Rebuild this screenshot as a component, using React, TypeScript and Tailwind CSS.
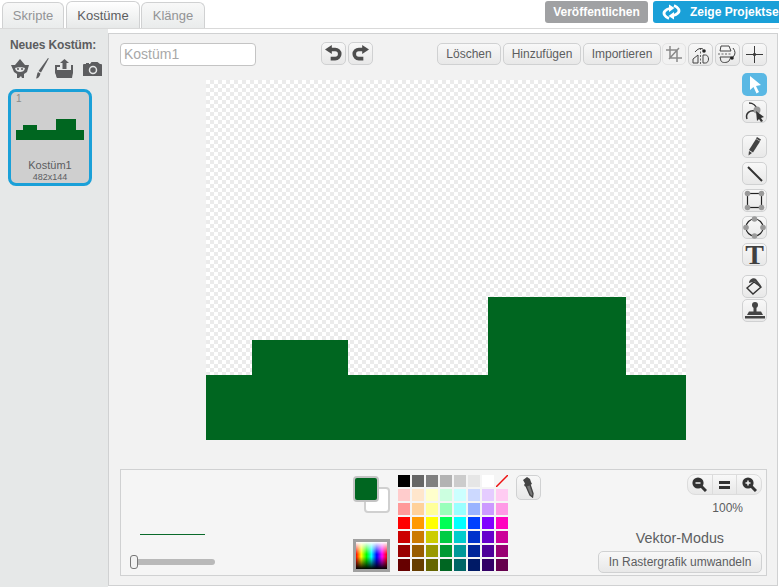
import type { ReactNode } from "react";

const palette = [
  "bg-[#000000]", "bg-[#666666]", "bg-[#808080]", "bg-[#b3b3b3]", "bg-[#cccccc]", "bg-[#e6e6e6]", "bg-[#ffffff]", "none",
  "bg-[#ffcccc]", "bg-[#ffe6cc]", "bg-[#ffffcc]", "bg-[#ccffe0]", "bg-[#ccffff]", "bg-[#ccd9ff]", "bg-[#e5ccff]", "bg-[#ffccf2]",
  "bg-[#ff9999]", "bg-[#ffd199]", "bg-[#ffff99]", "bg-[#99ffbb]", "bg-[#99ffff]", "bg-[#99b3ff]", "bg-[#cc99ff]", "bg-[#ff99e6]",
  "bg-[#ff0000]", "bg-[#ff9900]", "bg-[#ffff00]", "bg-[#00ff55]", "bg-[#00ffff]", "bg-[#0040ff]", "bg-[#8000ff]", "bg-[#ff00bf]",
  "bg-[#cc0000]", "bg-[#cc7a00]", "bg-[#cccc00]", "bg-[#00cc44]", "bg-[#00cccc]", "bg-[#0033cc]", "bg-[#6600cc]", "bg-[#cc0099]",
  "bg-[#990000]", "bg-[#995c00]", "bg-[#999900]", "bg-[#009933]", "bg-[#009999]", "bg-[#002699]", "bg-[#4d0099]", "bg-[#990073]",
  "bg-[#660000]", "bg-[#663d00]", "bg-[#666600]", "bg-[#006622]", "bg-[#006666]", "bg-[#001a66]", "bg-[#330066]", "bg-[#66004d]",
];

function IconButton({ children, className = "" }: { children: ReactNode; className?: string }) {
  return (
    <div className={`flex h-[23px] w-[25px] items-center justify-center rounded-[5px] border border-[#d0d1d2] bg-linear-to-b from-[#f8f8f8] to-[#e8e8e8] ${className}`}>
      {children}
    </div>
  );
}

function TextButton({ label, className = "" }: { label: string; className?: string }) {
  return (
    <div className={`flex h-[22px] items-center justify-center rounded-[5px] border border-[#d0d1d2] bg-linear-to-b from-[#f8f8f8] to-[#e8e8e8] text-[12px] whitespace-nowrap text-[#5c5d5f] ${className}`}>
      {label}
    </div>
  );
}

function Tab({ label, active, className = "" }: { label: string; active?: boolean; className?: string }) {
  return (
    <div
      className={`flex items-center justify-center rounded-t-[6px] border border-b-0 border-[#d0d1d2] text-[13px] ${
        active ? "h-[28px] bg-linear-to-b from-white to-[#e6e8e8] text-[#5c5d5f]" : "mt-[1px] h-[27px] bg-linear-to-b from-[#f8f8f8] to-[#e9ebeb] text-[#939496]"
      } ${className}`}
    >
      {label}
    </div>
  );
}

function Spectrum() {
  return (
    <svg width="31" height="27" viewBox="0 0 31 27">
      <defs>
        <linearGradient id="hue">
          <stop offset="0" stopColor="#ff0000" />
          <stop offset="0.17" stopColor="#ffff00" />
          <stop offset="0.34" stopColor="#00ff00" />
          <stop offset="0.5" stopColor="#00ffff" />
          <stop offset="0.67" stopColor="#0000ff" />
          <stop offset="0.84" stopColor="#ff00ff" />
          <stop offset="1" stopColor="#ff0000" />
        </linearGradient>
        <linearGradient id="shade" x1="0" y1="0" x2="0" y2="1">
          <stop offset="0" stopColor="#fff" stopOpacity="1" />
          <stop offset="0.45" stopColor="#fff" stopOpacity="0" />
          <stop offset="0.55" stopColor="#000" stopOpacity="0" />
          <stop offset="1" stopColor="#000" stopOpacity="1" />
        </linearGradient>
      </defs>
      <rect width="31" height="27" fill="url(#hue)" />
      <rect width="31" height="27" fill="url(#shade)" />
    </svg>
  );
}

export default function App() {
  return (
    <div className="flex h-[587px] w-[779px] flex-col overflow-hidden bg-white font-['Liberation_Sans',Arial,sans-serif]">
      <div className="flex h-[28px] shrink-0 items-start justify-between pl-[2px]">
        <div className="flex gap-[1px] pt-[1px]">
          <Tab label="Skripte" className="mr-[1px] w-[62px]" />
          <Tab label="Kostüme" active className="w-[74px]" />
          <Tab label="Klänge" className="w-[64px]" />
        </div>
        <div className="flex shrink-0 gap-[5px] pt-[1px]">
          <div className="flex h-[22px] w-[103px] items-center justify-center rounded-[3px] bg-[#a0a1a3] text-[12px] font-bold text-white">
            Veröffentlichen
          </div>
          <div className="flex h-[22px] w-[126px] items-center gap-[7px] overflow-hidden rounded-l-[3px] bg-[#1aa0d8] pl-[7px] text-[12px] font-bold whitespace-nowrap text-white">
            <svg className="shrink-0" width="23" height="18" viewBox="0 0 23 18" fill="none" stroke="#fff" strokeWidth="2.800">
              <path d="M9 15.500C5 14 2.500 10.500 5 8c1-1 2.500-2 4.500-2.500" />
              <path d="M14 2.500c4 1.500 6.500 5 4 7.500-1 1-2.500 2-4.500 2.500" />
              <path d="M9 1.500l5.500 3.500L9 9z" fill="#fff" stroke="none" />
              <path d="M14 16.500L8.500 13l5.500-4z" fill="#fff" stroke="none" />
            </svg>
            Zeige Projektseite
          </div>
        </div>
      </div>

      <div className="flex min-h-0 flex-1 border-t border-[#d9d9d9]">
        <aside className="w-[108px] shrink-0 bg-[#e6e8e8] pt-[9px]">
          <div className="pl-[10px] text-[12px] leading-[14px] font-bold tracking-[-0.15px] text-[#5c5d5f]">Neues Kostüm:</div>
          <div className="mt-[6px] flex items-center pl-[11px]">
            <svg width="18" height="20" viewBox="0 0 18 20">
              <path d="M0 6l4 0 5-6 5 6 4 0-2 7-3 2v4h-2l-1-2-2 2H6v-4l-3-2z" fill="#5c5d5f" />
              <path d="M4 9c2-1 8-1 10 0-.5 3-3 4-5 4s-4.500-1-5-4z" fill="#e6e8e8" />
              <circle cx="7" cy="10" r="1" fill="#5c5d5f" />
              <circle cx="11" cy="10" r="1" fill="#5c5d5f" />
            </svg>
            <svg className="ml-[6px]" width="14" height="21" viewBox="0 0 14 21">
              <path d="M13 0l.8.6L6 14.500 3.500 13z" fill="#5c5d5f" />
              <path d="M3 14l2.500 1.500C5 18.500 3 20.500 1 20.500c1-2 .5-4 2-6.500z" fill="#5c5d5f" />
            </svg>
            <svg className="ml-[5px]" width="20" height="20" viewBox="0 0 20 20">
              <path d="M1 6h5v2H3v5h14V6h2v7l-1 6H3l-2-6z" fill="#5c5d5f" />
              <path d="M1 11h18v2l-2 6H3l-2-6z" fill="#5c5d5f" />
              <path d="M8.500 10V4H6l4.500-4L15 4h-2.500v6z" fill="#5c5d5f" />
            </svg>
            <svg className="ml-[9px]" width="19" height="16" viewBox="0 0 19 16">
              <path d="M1 3h2V2h3v1h1l1.500-2h6L17 3h1a1 1 0 0 1 1 1v11H0V4a1 1 0 0 1 1-1z" fill="#5c5d5f" />
              <circle cx="10" cy="9" r="3.500" fill="none" stroke="#e6e8e8" strokeWidth="1.500" />
            </svg>
          </div>
          <div className="mt-[10px] ml-[8px] flex h-[97px] w-[84px] flex-col rounded-[8px] border-[3px] border-[#1aa0d8] bg-[#cfcfcf] px-[5px]">
            <div className="pt-[1px] text-[10px] leading-[12px] text-[#8a8a8a]">1</div>
            <svg className="mt-[14px] ml-0" width="68" height="21" viewBox="0 0 68 21">
              <rect y="11" width="68" height="10" fill="#006620" />
              <rect x="7" y="6" width="14" height="5" fill="#006620" />
              <rect x="40" width="20" height="11" fill="#006620" />
            </svg>
            <div className="mt-[18px] text-center text-[11px] leading-[14px] text-[#5c5d5f]">Kostüm1</div>
            <div className="text-center text-[9px] leading-[10px] text-[#5c5d5f]">482x144</div>
          </div>
        </aside>

        <div className="flex min-w-0 flex-1 flex-col pt-[4px] pr-[1px] pb-[1px]">
          <main className="flex min-h-0 flex-1 flex-col border border-[#d0d1d2] bg-[#f2f2f2] pt-[9px] pr-[10px] pb-[9px] pl-[11px]">
            <div className="flex h-[23px] shrink-0 items-start">
              <div className="flex h-[23px] w-[136px] items-center rounded-[4px] border border-[#c4c4c4] bg-white pl-[3px] text-[14px] text-[#a8a8a8]">
                Kostüm1
              </div>
              <div className="ml-[65px] flex gap-[2px]">
                <IconButton className="-mt-[1px]">
                  <svg width="17" height="17" viewBox="0 0 15 15" fill="none" stroke="#4d4d4d" strokeWidth="3.200">
                    <path d="M4 4h5a3.500 3.500 0 0 1 0 8H5" />
                    <path d="M6 0v8L0 4z" fill="#4d4d4d" stroke="none" />
                  </svg>
                </IconButton>
                <IconButton className="-mt-[1px]">
                  <svg width="17" height="17" viewBox="0 0 15 15" fill="none" stroke="#4d4d4d" strokeWidth="3.200">
                    <path d="M11 4H6a3.500 3.500 0 0 0 0 8h4" />
                    <path d="M9 0v8l6-4z" fill="#4d4d4d" stroke="none" />
                  </svg>
                </IconButton>
              </div>
              <div className="ml-auto flex items-start">
                <TextButton label="Löschen" className="mr-[2px] w-[64px]" />
                <TextButton label="Hinzufügen" className="mr-[2px] w-[78px]" />
                <TextButton label="Importieren" className="w-[78px]" />
                <div className="ml-[1px] flex h-[22px] w-[24px] items-center justify-center rounded-[5px] border border-[#e4e4e4]">
                  <svg width="16" height="16" viewBox="0 0 16 16" fill="none" stroke="#8a8a8a" strokeWidth="1.500">
                    <path d="M4 0v12h12M0 4h11v12M3 13L13 2" />
                  </svg>
                </div>
                <IconButton className="ml-[2px] h-[22px]">
                  <svg width="21" height="18" viewBox="0 0 21 18" fill="none" stroke="#444">
                    <path d="M10.500 2v16" strokeDasharray="2 1.500" stroke="#666" />
                    <path d="M8 9L3 13v4h5z" />
                    <path d="M13 9v8h2.500c2 0 3-2 3-4s-1-4-3-4z" />
                    <path d="M5 6Q9 1 13 3" />
                    <circle cx="14" cy="5" r="1.800" fill="#222" stroke="none" />
                  </svg>
                </IconButton>
                <IconButton className="ml-[2px] h-[22px]">
                  <svg width="21" height="19" viewBox="0 0 21 19" fill="none" stroke="#444">
                    <path d="M1 9h14" strokeDasharray="2 1.500" stroke="#666" />
                    <path d="M4 1h8l2 5H3z" />
                    <path d="M3 12h11l-2 4c-2 2-7 2-8 0z" />
                    <path d="M16 3q4 5 0 9" />
                    <circle cx="15" cy="13" r="1.800" fill="#222" stroke="none" />
                  </svg>
                </IconButton>
                <IconButton className="ml-[2px] h-[22px]">
                  <svg width="21" height="21" viewBox="0 0 21 21" stroke="#3a3a3a">
                    <path d="M2 10.500h17M10.500 2v17" />
                    <circle cx="10.500" cy="10.500" r="1.200" fill="#3a3a3a" />
                  </svg>
                </IconButton>
              </div>
            </div>

            <div className="flex h-[403px] shrink-0 items-start justify-between pt-[7px]">
              <div className="mt-[7px] ml-[86px] h-[360px] w-[480px] bg-[repeating-conic-gradient(#ebebeb_0_25%,#ffffff_0_50%)] bg-[length:8px_8px]">
                <svg width="480" height="360" viewBox="0 0 480 360">
                  <rect y="295" width="480" height="65" fill="#006620" />
                  <rect x="46" y="260" width="96" height="35" fill="#006620" />
                  <rect x="282" y="217" width="138" height="78" fill="#006620" />
                </svg>
              </div>
              <div className="flex w-[25px] flex-col">
                <div className="flex h-[23px] w-[25px] items-center justify-center rounded-[5px] bg-[#5ab8e4]">
                  <svg width="14" height="18" viewBox="0 0 14 18">
                    <path d="M2 0l11 9-5 1 3 6-2.500 1.500L5.500 11 2 14z" fill="#fff" />
                  </svg>
                </div>
                <IconButton className="mt-[4px]">
                  <svg width="21" height="20" viewBox="0 0 21 20" fill="none">
                    <path d="M3 17c-2-6 3-9 8-8M5 1c4 0 7 3 8 6" stroke="#333" strokeWidth="1.500" />
                    <circle cx="13" cy="8" r="3.500" fill="#9a9a9a" />
                    <path d="M12 9l8 6-3 1 2 3-2 1-2-3-2 2z" fill="#333" />
                  </svg>
                </IconButton>
                <IconButton className="mt-[12px]">
                  <svg width="14" height="19" viewBox="0 0 14 19">
                    <path d="M8 2l4 2.500-7 11L1 13z" fill="#444" />
                    <path d="M1 14l3 2-3.500 2.500z" fill="#444" />
                    <path d="M9 0l4 2.500-1 1.500-4-2.500z" fill="#444" />
                  </svg>
                </IconButton>
                <IconButton className="mt-[4px]">
                  <svg width="16" height="16" viewBox="0 0 16 16">
                    <path d="M1 1l14 14" stroke="#333" strokeWidth="2" />
                  </svg>
                </IconButton>
                <IconButton className="mt-[4px]">
                  <svg width="21" height="21" viewBox="0 0 21 21">
                    <rect x="3.500" y="3.500" width="14" height="14" fill="none" stroke="#222" strokeWidth="1.200" />
                    <circle cx="3.500" cy="3.500" r="2.800" fill="#9a9a9a" />
                    <circle cx="17.500" cy="3.500" r="2.800" fill="#9a9a9a" />
                    <circle cx="3.500" cy="17.500" r="2.800" fill="#9a9a9a" />
                    <circle cx="17.500" cy="17.500" r="2.800" fill="#9a9a9a" />
                  </svg>
                </IconButton>
                <IconButton className="mt-[4px]">
                  <svg width="23" height="23" viewBox="0 0 23 23">
                    <circle cx="11.500" cy="11.500" r="8.500" fill="none" stroke="#222" strokeWidth="1.200" />
                    <circle cx="11.500" cy="3" r="2.800" fill="#9a9a9a" />
                    <circle cx="11.500" cy="20" r="2.800" fill="#9a9a9a" />
                    <circle cx="3" cy="11.500" r="2.800" fill="#9a9a9a" />
                    <circle cx="20" cy="11.500" r="2.800" fill="#9a9a9a" />
                  </svg>
                </IconButton>
                <IconButton className="mt-[4px]">
                  <span className="font-['Liberation_Serif',serif] text-[28px] leading-[23px] font-bold text-[#404040]">T</span>
                </IconButton>
                <IconButton className="mt-[9px]">
                  <svg width="19" height="19" viewBox="0 0 19 19" fill="none">
                    <path d="M9 5L2 11l6 6 8-7z" stroke="#333" strokeWidth="1.400" />
                    <path d="M4 6c0-4 5-6 7-4l5 6.500-1 2-5-6z" fill="#444" />
                  </svg>
                </IconButton>
                <IconButton className="mt-[1px]">
                  <svg width="20" height="19" viewBox="0 0 20 19">
                    <circle cx="10" cy="4" r="3" fill="#444" />
                    <rect x="8.500" y="5" width="3" height="6" fill="#444" />
                    <path d="M4 10.500h12l2 3.500H2z" fill="#444" />
                    <rect y="15" width="20" height="2.500" fill="#444" />
                  </svg>
                </IconButton>
              </div>
            </div>

            <div className="flex h-[107px] shrink-0 border border-[#d0d1d2] bg-[#f5f5f5]">
              <div className="flex w-[232px] shrink-0 flex-col pt-[64px] pl-[9px]">
                <div className="ml-[10px] h-[1px] w-[65px] bg-[#0a6a2a]" />
                <div className="relative mt-[24px] h-[6px] w-[85px] rounded-full bg-[#b9b9b9]">
                  <div className="absolute -top-[4px] left-0 h-[14px] w-[8px] rounded-[3px] border border-[#777] bg-[#f2f2f2]" />
                </div>
              </div>
              <div className="flex w-[45px] shrink-0 flex-col pt-[6px]">
                <div className="relative z-10 h-[26px] w-[26px] rounded-[4px] border-2 border-[#c4c4c4] bg-[#006620]" />
                <div className="-mt-[15px] ml-[11px] h-[26px] w-[26px] rounded-[4px] border-2 border-[#d0d0d0] bg-white" />
                <div className="mt-[26px] h-[33px] w-[37px] border-[3px] border-[#a0a0a0] leading-[0]">
                  <Spectrum />
                </div>
              </div>
              <div className="grid w-[118px] shrink-0 grid-cols-[repeat(8,12px)] grid-rows-[repeat(7,12px)] gap-[2px] pt-[5px]">
                {palette.map((c, i) =>
                  c === "none" ? (
                    <svg key={i} width="12" height="12" viewBox="0 0 12 12">
                      <path d="M0 12L12 0" stroke="#ee1111" strokeWidth="1.500" />
                    </svg>
                  ) : (
                    <div key={i} className={c} />
                  ),
                )}
              </div>
              <IconButton className="mt-[5px] h-[25px] w-[25px]">
                <svg width="15" height="21" viewBox="0 0 15 21">
                  <path d="M2 3l4-3 3 2 1 3 1 2-2 1-5 1.500-1-1.500 1-1.500z" fill="#444" />
                  <path d="M5 9l4-1.500 3 9-.5 3.500-2.500-2z" fill="#777" stroke="#444" strokeWidth="1.400" />
                </svg>
              </IconButton>
              <div className="ml-auto flex w-[170px] shrink-0 flex-col items-end pt-[4px] pr-[4px]">
                <div className="flex h-[21px] w-[75px] rounded-[8px] border border-[#dcdcdc] bg-linear-to-b from-[#f8f8f8] to-[#e8e8e8]">
                  <div className="flex flex-1 items-center justify-center border-r border-[#dcdcdc]">
                    <svg width="15" height="15" viewBox="0 0 15 15" fill="none" stroke="#333" strokeWidth="2.200">
                      <circle cx="6" cy="6" r="4.500" fill="#333" />
                      <path d="M9 9l5 5" strokeWidth="3" />
                      <path d="M3.500 6h5" stroke="#f2f2f2" strokeWidth="1.500" />
                    </svg>
                  </div>
                  <div className="flex flex-1 items-center justify-center border-r border-[#dcdcdc]">
                    <div className="flex h-[8px] w-[11px] flex-col justify-between">
                      <div className="h-[3px] bg-[#333]" />
                      <div className="h-[3px] bg-[#333]" />
                    </div>
                  </div>
                  <div className="flex flex-1 items-center justify-center">
                    <svg width="15" height="15" viewBox="0 0 15 15" fill="none" stroke="#333" strokeWidth="2.200">
                      <circle cx="6" cy="6" r="4.500" fill="#333" />
                      <path d="M9 9l5 5" strokeWidth="3" />
                      <path d="M3.500 6h5M6 3.500v5" stroke="#f2f2f2" strokeWidth="1.500" />
                    </svg>
                  </div>
                </div>
                <div className="mt-[6px] mr-[19px] text-[12px] leading-[14px] text-[#5c5d5f]">100%</div>
                <div className="mt-[15px] mr-[38px] text-[14.3px] leading-[16px] text-[#5c5d5f]">Vektor-Modus</div>
                <TextButton label="In Rastergrafik umwandeln" className="mt-[5px] h-[21px] w-[164px] text-[12.5px]" />
              </div>
            </div>
          </main>
        </div>
      </div>
    </div>
  );
}
